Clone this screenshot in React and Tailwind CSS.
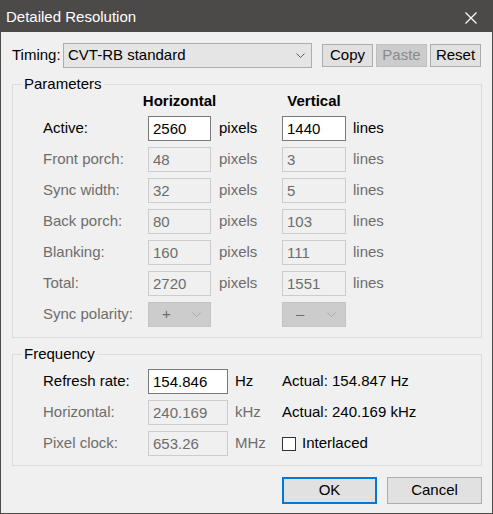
import React from 'react';

const params = [
  { label: 'Active:', h: '2560', v: '1440', on: true },
  { label: 'Front porch:', h: '48', v: '3' },
  { label: 'Sync width:', h: '32', v: '5' },
  { label: 'Back porch:', h: '80', v: '103' },
  { label: 'Blanking:', h: '160', v: '111' },
  { label: 'Total:', h: '2720', v: '1551' },
];

const Chevron = ({ color = '#5b5b5b' }) => (
  <svg width="9" height="5" viewBox="0 0 9 5" className="shrink-0">
    <path d="M0.5 0.5 L4.5 4.5 L8.5 0.5" fill="none" stroke={color} strokeWidth="1" />
  </svg>
);

const Field = ({ value, on, w }) => (
  <input
    readOnly
    value={value}
    className={`${w} h-[25px] border pl-[4px] outline-none text-[15px] ${
      on ? 'bg-white border-[#7a7a7a] text-black' : 'bg-[#f0f0f0] border-[#cccccc] text-[#6d6d6d]'
    }`}
  />
);

const Polarity = ({ sign, w }) => (
  <div className={`${w} h-[25px] bg-[#cccccc] border border-[#c4c4c4] flex items-center pl-[13px] pr-[9px] text-[#6d6d6d]`}>
    <span className="flex-1">{sign}</span>
    <Chevron color="#a8a8a8" />
  </div>
);

const Button = ({ children, disabled, primary, className = '' }) => (
  <button
    className={`flex items-center justify-center ${
      disabled
        ? 'bg-[#cccccc] border border-[#bfbfbf] text-[#8a8a8a]'
        : primary
        ? 'bg-[#e1e1e1] border-2 border-[#0078d7] text-black'
        : 'bg-[#e1e1e1] border border-[#adadad] text-black'
    } ${className}`}
  >
    {children}
  </button>
);

export default function App() {
  return (
    <div className="w-[493px] h-[514px] bg-[#f0f0f0] border-x border-b border-[#4b4a48] flex flex-col font-['Liberation_Sans',Arial,sans-serif] text-[15px] text-black">
      <div className="h-[32px] bg-[#4b4a48] flex items-center pl-[5px] pt-[3px] text-white shrink-0">
        <span>Detailed Resolution</span>
        <svg width="12" height="12" viewBox="0 0 12 12" className="ml-auto mr-[15px]">
          <path d="M0.5 0.5 L11.5 11.5 M11.5 0.5 L0.5 11.5" stroke="#ffffff" strokeWidth="1.2" />
        </svg>
      </div>

      <div className="flex flex-col pt-[11px] pl-[11px] pr-[10px]">
        <div className="flex items-center h-[25px]">
          <span className="w-[51px]">Timing:</span>
          <div className="w-[249px] h-[25px] bg-[#e5e5e5] border border-[#adadad] flex items-center pl-[4px] pr-[6px]">
            <span className="flex-1">CVT-RB standard</span>
            <Chevron />
          </div>
          <Button className="ml-[10px] w-[51px] h-[23px]">Copy</Button>
          <Button disabled className="ml-[3px] w-[51px] h-[23px]">Paste</Button>
          <Button className="ml-[3px] w-[51px] h-[23px]">Reset</Button>
        </div>

        <fieldset className="mt-[8px] border border-[#dcdcdc]">
          <legend className="ml-[9px] px-[2px] leading-[16px]">Parameters</legend>
          <div className="pl-[30px] pb-[10px] flex flex-col gap-[6px]">
            <div className="flex h-[18px] items-center font-bold">
              <span className="w-[105px]" />
              <span className="w-[63px] flex justify-center whitespace-nowrap">Horizontal</span>
              <span className="w-[71px]" />
              <span className="w-[64px] flex justify-center whitespace-nowrap">Vertical</span>
            </div>
            {params.map((p) => (
              <div key={p.label} className={`flex items-center h-[25px] ${p.on ? 'text-black' : 'text-[#6d6d6d]'}`}>
                <span className="w-[105px]">{p.label}</span>
                <Field value={p.h} on={p.on} w="w-[63px]" />
                <span className="w-[71px] pl-[8px]">pixels</span>
                <Field value={p.v} on={p.on} w="w-[64px]" />
                <span className="pl-[7px]">lines</span>
              </div>
            ))}
            <div className="flex items-center h-[25px] text-[#6d6d6d]">
              <span className="w-[105px]">Sync polarity:</span>
              <Polarity sign="+" w="w-[63px]" />
              <span className="w-[71px]" />
              <Polarity sign="–" w="w-[64px]" />
            </div>
          </div>
        </fieldset>

        <fieldset className="mt-[8px] border border-[#dcdcdc]">
          <legend className="ml-[9px] px-[2px] leading-[16px]">Frequency</legend>
          <div className="pl-[30px] pt-[7px] pb-[9px] flex flex-col gap-[6px]">
            <div className="flex items-center h-[25px]">
              <span className="w-[105px]">Refresh rate:</span>
              <Field value="154.846" on w="w-[80px]" />
              <span className="w-[54px] pl-[7px]">Hz</span>
              <span>Actual: 154.847 Hz</span>
            </div>
            <div className="flex items-center h-[25px]">
              <span className="w-[105px] text-[#6d6d6d]">Horizontal:</span>
              <Field value="240.169" w="w-[80px]" />
              <span className="w-[54px] pl-[7px] text-[#6d6d6d]">kHz</span>
              <span>Actual: 240.169 kHz</span>
            </div>
            <div className="flex items-center h-[25px]">
              <span className="w-[105px] text-[#6d6d6d]">Pixel clock:</span>
              <Field value="653.26" w="w-[80px]" />
              <span className="w-[54px] pl-[7px] text-[#6d6d6d]">MHz</span>
              <label className="flex items-center gap-[6px]">
                <span className="w-[14px] h-[14px] border border-[#333333] bg-white" />
                Interlaced
              </label>
            </div>
          </div>
        </fieldset>

        <div className="flex justify-end gap-[10px] mt-[11px]">
          <Button primary className="w-[95px] h-[27px]">OK</Button>
          <Button className="w-[95px] h-[27px]">Cancel</Button>
        </div>
      </div>
    </div>
  );
}
